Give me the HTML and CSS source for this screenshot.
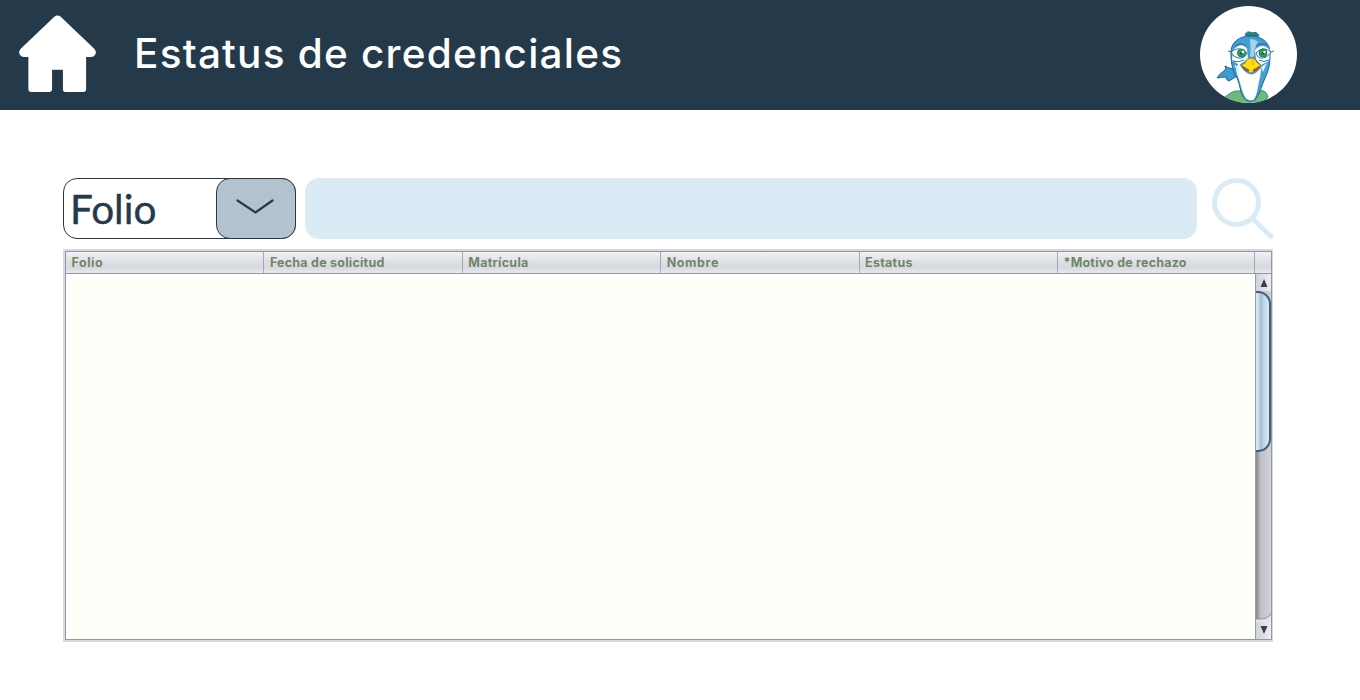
FILE: index.html
```html
<!DOCTYPE html>
<html lang="es">
<head>
<meta charset="utf-8">
<title>Estatus de credenciales</title>
<link rel="stylesheet" href="styles.css">
</head>
<body>
<header class="topbar">
  <svg class="home" viewBox="0 0 78 78"><path d="M35.5 1.5Q39 -1.5 42.500 1.500L76.500 34Q79 37 77 40Q75.500 42 73 42H68V75Q68 77.500 65.500 77.500H46.500Q44.500 77.500 44.500 75V55H33.500V75Q33.500 77.500 31 77.500H12Q9.500 77.500 9.500 75V42H5Q2.500 42 1 40Q-1 37 1.500 34Z"/></svg>
  <h1 class="title">Estatus de credenciales</h1>
  <svg class="avatar" viewBox="0 0 97 97">
    <defs><clipPath id="disc"><circle cx="48.500" cy="48.500" r="48.500"/></clipPath></defs>
    <circle cx="48.500" cy="48.500" r="48.500" fill="#fff"/>
    <g clip-path="url(#disc)" stroke="#17649c" stroke-width="1" stroke-linejoin="round">
      <path d="M24 92Q33 84 38 85H59Q66 83 68 91L60 100H30Z" fill="#6cbb78" stroke="#338b68"/>
      <path d="M33 63Q28 62 25 60Q27 63 24 65Q19 68 17 72Q22 71 26 71Q26 74 29 75Q34 72 37 70Z" fill="#3d9dd2"/>
      <path d="M45 29Q47 24 52 27Q57 25 59 30Q54 31 45 29Z" fill="#238e66"/>
      <path d="M31 48C30 36 40 30 50 30C62 30 71 37 70 49C70 58 69 64 65 72C61 81 60 88 55 94Q49 97 45 93C40 88 41 81 37 72C33 66 31 58 31 48Z" fill="#459fd1"/>
      <path d="M39 57Q50 77 61 61Q62 65 60 73C58 81 58 88 54 94Q50 96 46 93C41 86 41 79 37 69Q34 61 39 57Z" fill="#fff" stroke="#3785b7" stroke-width=".6"/>
      <path d="M33 44Q42 35 47 43L48 53L39 59L32 54ZM55 44Q62 36 70 44L69 55L61 59L56 53Z" fill="#fff" stroke="none"/>
      <path d="M50 33Q51 44 50 50Q52 52 54 50Q54 42 58 36Q55 33 50 33Z" fill="#a4d3ec" stroke="none"/>
      <path d="M34 59L40 61L38 66ZM67 57L61 61L63 66Z" fill="#dceef8" stroke="none"/>
      <path d="M31 46Q39 39 47 47Q45 53 38 52Q33 51 31 46ZM56 47Q63 39 71 46Q67 53 60 52Q57 51 56 47Z" fill="#fff" stroke-width=".9"/>
      <path d="M35 40Q41 36 46 40M56 40Q61 36 67 39M33 55Q39 57 44 54M59 54Q64 57 69 54M31 46L28 45M71 46L74 45" fill="none" stroke-width=".9"/>
      <circle cx="41.500" cy="47" r="4" fill="#26a455" stroke="#217c59"/><circle cx="63" cy="47" r="4" fill="#26a455" stroke="#217c59"/>
      <circle cx="41.500" cy="47.500" r="1.500" fill="#176052" stroke="none"/><circle cx="63" cy="47.500" r="1.500" fill="#176052" stroke="none"/>
      <circle cx="43" cy="46" r="1.400" fill="#fff" stroke="none"/><circle cx="64.500" cy="46" r="1.200" fill="#fff" stroke="none"/>
      <path d="M41 59Q46 58 47 53Q51 51 55 53Q57 58 61 59Q58 65 51 67Q45 65 41 59Z" fill="#f9df13" stroke="#806b31" stroke-width=".7"/>
      <path d="M42 60L49 64L48 65.500Q43 63 42 60M60 60L53 64L54 65.500Q59 63 60 60Z" fill="#d34942" stroke="#704539" stroke-width=".6"/>
      <path d="M53 54V59" stroke="#f4a11c"/>
    </g>
  </svg>
</header>
<main class="content">
  <section class="search">
    <div class="select"><span class="select-value">Folio</span><span class="select-button"><svg class="chevron" viewBox="0 0 38 16"><path d="M1.500 1.500L19.500 13.500L36.500 1.500"/></svg></span></div>
    <div class="field"></div>
    <svg class="lens" viewBox="0 0 62 62"><circle cx="24.500" cy="24.500" r="22"/><path d="M41 41L59 58.500"/></svg>
  </section>
  <section class="table">
    <div class="head"><div class="cell"><span class="w-folio">Folio</span></div><div class="cell"><span class="w-fecha">Fecha de solicitud</span></div><div class="cell"><span class="w-matricula">Matrícula</span></div><div class="cell"><span class="w-nombre">Nombre</span></div><div class="cell"><span class="w-estatus">Estatus</span></div><div class="cell"><span class="w-motivo">*Motivo de rechazo</span></div><div class="corner"></div></div>
    <div class="body">
      <div class="rows"></div>
      <div class="scroll">
        <div class="arrow"><svg viewBox="0 0 8 8"><path d="M4 0L7.500 8H.5Z"/></svg></div>
        <div class="track"><div class="thumb"></div><svg class="track-end" viewBox="0 0 15 9"><path d="M0 6Q13 7 15 0V9H0Z" fill="#e4e6ea"/><path d="M0 6Q13 7 15 0" fill="none" stroke="#96979d"/></svg></div>
        <div class="arrow down"><svg viewBox="0 0 8 8"><path d="M4 8L7.500 0H.5Z"/></svg></div>
      </div>
    </div>
  </section>
</main>
</body>
</html>
```
FILE: styles.css
```css
* { box-sizing: border-box; }
body { margin: 0; background: #fff; font-family: Inter, "Liberation Sans", sans-serif; }
.topbar { height: 110px; background: #243949; display: flex; align-items: flex-start; padding: 0 63px 0 19px; }
.home { width: 77px; height: 78px; margin-top: 14.5px; fill: #fff; flex: none; }
.title { margin: 29px 0 0 38px; font-size: 40.5px; line-height: 50px; font-weight: 500; letter-spacing: 1.22px; color: #fff; white-space: nowrap; }
.avatar { width: 97px; height: 97px; margin: 6px 0 0 auto; flex: none; }
.content { padding: 68px 86px 0 63px; }
.search { display: flex; height: 61px; }
.select { width: 233px; border: 1px solid #243949; border-radius: 14px; display: flex; justify-content: space-between; flex: none; }
.select-value { padding-left: 6px; font-family: Lato, sans-serif; font-size: 40.5px; line-height: 59px; letter-spacing: 0; color: #243949; -webkit-text-stroke: .4px #243949; }
.select-button { width: 80px; margin: -1px; border: 1px solid #243949; border-radius: 14px; background: #b2c3cf; display: flex; justify-content: center; padding-top: 20px; }
.chevron { width: 38px; height: 16px; fill: none; stroke: #243949; stroke-width: 2.2; stroke-linecap: round; margin-right: 2px; }
.field { width: 892px; margin-left: 9px; background: #dbebf6; border-radius: 14px; flex: none; }
.lens { width: 62px; height: 62px; margin-left: 15px; fill: none; stroke: #dbebf6; stroke-width: 5; stroke-linecap: round; flex: none; }
.table { width: 1210px; height: 393px; margin-top: 10px; border: 2px solid #d6d9df; border-right-width: 1px; display: flex; flex-direction: column; padding: 0; }
.head { height: 23px; display: flex; background: linear-gradient(#f2f2f5 0%, #dfe0e5 45%, #d6d9df 75%, #e8eaf0 100%); border: 1px solid #9297a1; flex: none; }
.cell { width: 198.4px; padding-left: 5.5px; border-right: 1px solid #a5a9b2; font-size: 12.5px; line-height: 22px; font-weight: 700; color: #6f8767; white-space: nowrap; flex: none; }
.cell:nth-child(6) { width: 197.400px; }
.corner { flex: 1; }
.w-folio { letter-spacing: .5px; }
.w-fecha { letter-spacing: .23px; }
.w-matricula { letter-spacing: .28px; }
.w-nombre { letter-spacing: .6px; }
.w-estatus { letter-spacing: .25px; }
.w-motivo { letter-spacing: .2px; }
.body { flex: 1; display: flex; background: #fffffa; border: 1px solid #9297a1; border-top: 0; }
.rows { flex: 1; }
.scroll { width: 16px; display: flex; flex-direction: column; border-left: 1px solid #999ca3; background: #d5d6da; }
.arrow { height: 17px; display: flex; justify-content: center; align-items: center; background: linear-gradient(90deg, #d0d3d9, #eceef2); flex: none; }
.arrow svg { width: 8px; height: 8px; fill: #3d4045; }
.down svg { margin-bottom: 2px; }
.track { flex: 1; display: flex; flex-direction: column; justify-content: space-between; background: linear-gradient(90deg, #85868c, #bfc0c6 30%, #d4d5da); }
.thumb { height: 161px; border: 2px solid #3f5f7c; border-left: 0; border-radius: 0 13px 13px 0; background: linear-gradient(90deg, #e2edf5 0, #c8dcea 20%, #a2bdd1 38%, #b9d4e7 55%, #d9ecf7 100%); }
.track-end { width: 15px; height: 9px; display: block; }
```
